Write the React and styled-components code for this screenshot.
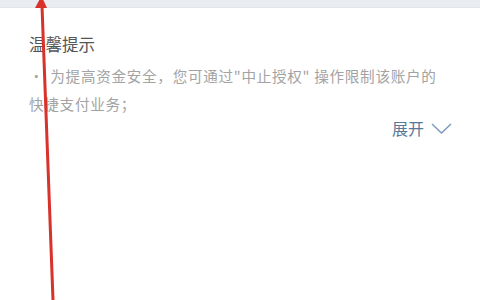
import React from "react";
import styled, { createGlobalStyle } from "styled-components";

const GlobalStyle = createGlobalStyle`
  html, body {
    margin: 0;
    padding: 0;
    background: #ffffff;
  }
  body {
    font-family: "Noto Sans CJK SC", "Noto Sans", sans-serif;
  }
`;

const Page = styled.div`
  position: relative;
  width: 480px;
  height: 300px;
  overflow: hidden;
  background: #ffffff;
`;

const TopBar = styled.div`
  height: 7px;
  background: #e9ecf1;
  border-bottom: 1px solid #e2e5ea;
`;

const Card = styled.div`
  padding: 23px 28px 0 29px;
`;

const Title = styled.h3`
  margin: 0;
  font-size: 16.5px;
  font-weight: 400;
  line-height: 26px;
  color: #555555;
`;

const Notice = styled.p`
  margin: 5px 0 0;
  width: 418px;
  font-size: 14.6px;
  line-height: 28px;
  color: #a3a3a3;
  letter-spacing: 0.7px;
`;

const Bullet = styled.span`
  margin-right: 6px;
`;

const ExpandRow = styled.div`
  display: flex;
  justify-content: flex-end;
  align-items: center;
  gap: 7px;
  margin-top: -1px;
`;

const ExpandText = styled.span`
  font-size: 16px;
  line-height: 22px;
  color: #58789a;
`;

const Arrow = styled.svg`
  position: absolute;
  left: 0;
  top: 0;
  pointer-events: none;
`;

export default function App() {
  return (
    <Page>
      <GlobalStyle />
      <TopBar />
      <Card>
        <Title>温馨提示</Title>
        <Notice>
          <Bullet>•</Bullet>为提高资金安全，您可通过"中止授权" 操作限制该账户的快捷支付业务；
        </Notice>
        <ExpandRow>
          <ExpandText>展开</ExpandText>
          <svg width="21" height="11" viewBox="0 0 21 11">
            <path d="M1 1 L10.5 10 L20 1" fill="none" stroke="#7d9bbb" strokeWidth="1.5" />
          </svg>
        </ExpandRow>
      </Card>
      <Arrow width="480" height="300" viewBox="0 0 480 300">
        <path d="M53 300 L42 6" stroke="#d8322c" strokeWidth="3" fill="none" />
        <path d="M35 8 L41.5 -4 L47 8 Z" fill="#d8322c" />
      </Arrow>
    </Page>
  );
}
